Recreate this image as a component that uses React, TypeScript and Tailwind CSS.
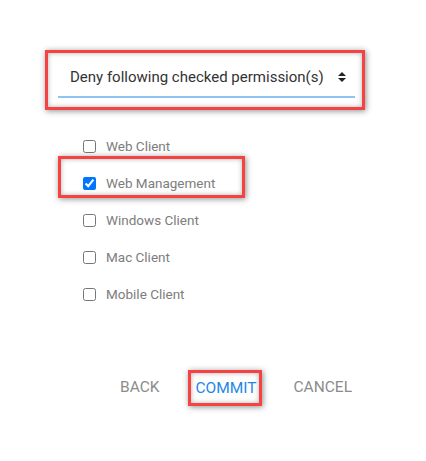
import React from "react";

const items = [
  { label: "Web Client", checked: false },
  { label: "Web Management", checked: true },
  { label: "Windows Client", checked: false },
  { label: "Mac Client", checked: false },
  { label: "Mobile Client", checked: false },
];

const hl =
  "border-[3px] border-[#f54242] shadow-[1px_1px_6px_rgba(0,0,0,0.45),inset_0_0_5px_rgba(0,0,0,0.3)]";

export default function App() {
  return (
    <div className="w-[426px] h-[461px] bg-white pt-[50px] font-['Roboto',sans-serif]">
      <div className={`ml-[45px] w-[320px] h-[60px] pl-[10px] pr-[7px] pt-[5px] ${hl}`}>
        <div className="h-[40px] border-b-2 border-[#90c4f0] flex items-center justify-between pl-[12px] pr-[8px]">
          <span className="text-[15px] text-[#333]">Deny following checked permission(s)</span>
          <svg width="10" height="12" viewBox="0 0 10 12">
            <path d="M1 5 L5 1 L9 5 Z" fill="#222" />
            <path d="M1 7 L5 11 L9 7 Z" fill="#222" />
          </svg>
        </div>
      </div>

      <div className="mt-[18px] flex flex-col">
        {items.map((it) => (
          <div key={it.label} className="h-[37px] flex items-center pl-[83px]">
            <div className="relative flex items-center gap-[10px]">
              {it.checked && (
                <div className={`absolute left-[-25px] top-[-17px] w-[187px] h-[42px] ${hl}`} />
              )}
              <input
                type="checkbox"
                defaultChecked={it.checked}
                className="w-[13px] h-[13px] m-0"
              />
              <span className="text-[13.5px] text-[#7d7d7d]">{it.label}</span>
            </div>
          </div>
        ))}
      </div>

      <div className="mt-[57px] flex items-center text-[15.5px]">
        <span className="ml-[120px] text-[#8c8c8c]">BACK</span>
        <div className={`ml-[28px] w-[74px] h-[36px] flex items-center pl-[5px] pt-[2px] ${hl}`}>
          <span className="text-[#1e88e5]">COMMIT</span>
        </div>
        <span className="ml-[32px] text-[#8c8c8c]">CANCEL</span>
      </div>
    </div>
  );
}
